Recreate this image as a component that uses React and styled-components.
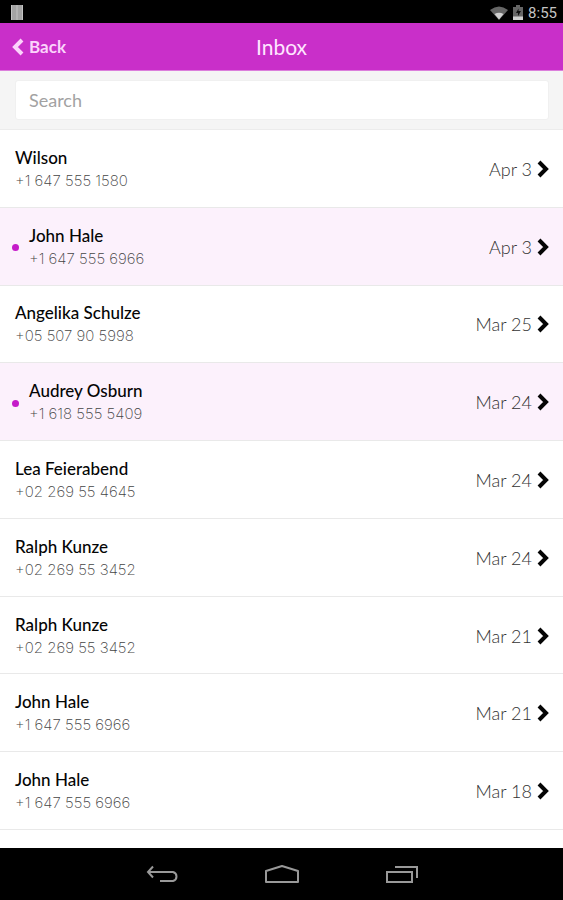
import React from "react";
import styled, { createGlobalStyle } from "styled-components";

const GlobalStyle = createGlobalStyle`
  * { box-sizing: border-box; }
  body {
    margin: 0;
    background: #fff;
    color: #050505;
    font-family: Lato, "Open Sans", sans-serif;
  }
  button, input { font: inherit; }
`;

const Screen = styled.div`
  display: flex;
  flex-direction: column;
  min-height: 100vh;
`;

const StatusBar = styled.div`
  display: flex;
  align-items: center;
  gap: 5px;
  height: 23px;
  padding: 2px 6px 0 11px;
  background: #000;
  color: #c4c4c4;
  font: 15px/20px Roboto, sans-serif;
`;

const StatusSpacer = styled.span`
  flex: 1;
`;

const Header = styled.header`
  display: grid;
  grid-template-columns: 1fr auto 1fr;
  align-items: center;
  height: 48px;
  padding: 0 12px;
  background: #c92fc9;
  color: #ffe6ff;
  border-bottom: 1px solid #dc7fdc;
`;

const BackButton = styled.button`
  display: flex;
  align-items: center;
  justify-self: start;
  gap: 5px;
  padding: 0;
  border: 0;
  background: none;
  color: #fbd3fb;
  font-size: 17px;
  line-height: 24px;
  font-weight: 700;
`;

const Title = styled.h1`
  margin: 0;
  font-size: 21px;
  line-height: 28px;
  font-weight: 400;
`;

const SearchBar = styled.div`
  padding: 9px 14px 9px 15px;
  background: #f5f5f5;
  border-bottom: 1px solid #ececec;
`;

const SearchInput = styled.input`
  display: block;
  width: 100%;
  height: 40px;
  padding: 0 13px;
  border: 1px solid #f0f0f0;
  border-radius: 3px;
  background: #fff;
  color: #333;
  font-size: 18px;
  outline: none;
  &::placeholder { color: #a2a2a2; opacity: 1; }
`;

const MessageList = styled.ul`
  flex: 1;
  display: grid;
  grid-auto-rows: 1fr;
  margin: 0;
  padding: 0 0 18px;
  list-style: none;
`;

const MessageItem = styled.li`
  display: flex;
  border-bottom: 1px solid #e9e9e9;
  background: ${(p) => (p.$unread ? "#fcf1fc" : "#fff")};
`;

const MessageButton = styled.button`
  flex: 1;
  display: flex;
  align-items: center;
  padding: 1px 14px 0 ${(p) => (p.$unread ? "12px" : "15px")};
  border: 0;
  background: none;
  color: inherit;
  text-align: left;
`;

const UnreadDot = styled.span`
  width: 7px;
  height: 7px;
  margin: 2px 10px 0 0;
  border-radius: 50%;
  background: #c51bc9;
`;

const Contact = styled.span`
  flex: 1;
  display: flex;
  flex-direction: column;
`;

const Name = styled.span`
  font-size: 17px;
  line-height: 23px;
  font-weight: 500;
`;

const Phone = styled.span`
  color: #444;
  font-family: Inter, Lato, sans-serif;
  font-size: 15px;
  line-height: 23px;
  font-weight: 200;
`;

const DateText = styled.time`
  margin-right: 5px;
  color: #333;
  font-size: 18px;
  line-height: 24px;
  font-weight: 300;
`;

const NavBar = styled.nav`
  display: flex;
  justify-content: center;
  align-items: center;
  gap: 72px;
  height: 52px;
  padding-top: 2px;
  background: #000;
`;

const NavButton = styled.button`
  display: flex;
  padding: 4px 6px;
  border: 0;
  background: none;
  color: #999;
`;

const messages = [
  { name: "Wilson", phone: "+1 647 555 1580", date: "Apr 3" },
  { name: "John Hale", phone: "+1 647 555 6966", date: "Apr 3", unread: true },
  { name: "Angelika Schulze", phone: "+05 507 90 5998", date: "Mar 25" },
  { name: "Audrey Osburn", phone: "+1 618 555 5409", date: "Mar 24", unread: true },
  { name: "Lea Feierabend", phone: "+02 269 55 4645", date: "Mar 24" },
  { name: "Ralph Kunze", phone: "+02 269 55 3452", date: "Mar 24" },
  { name: "Ralph Kunze", phone: "+02 269 55 3452", date: "Mar 21" },
  { name: "John Hale", phone: "+1 647 555 6966", date: "Mar 21" },
  { name: "John Hale", phone: "+1 647 555 6966", date: "Mar 18" },
];

function Chevron({ left }) {
  return (
    <svg width="12" height="18" viewBox="0 0 12 18" fill="none" stroke="currentColor" strokeWidth="4" aria-hidden="true">
      <path d={left ? "M10 2 3 9l7 7" : "M2 2l7 7-7 7"} />
    </svg>
  );
}

function Message({ name, phone, date, unread }) {
  return (
    <MessageItem $unread={unread}>
      <MessageButton $unread={unread}>
        {unread && <UnreadDot />}
        <Contact>
          <Name>{name}</Name>
          <Phone>{phone}</Phone>
        </Contact>
        <DateText>{date}</DateText>
        <Chevron />
      </MessageButton>
    </MessageItem>
  );
}

export default function App() {
  return (
    <Screen>
      <GlobalStyle />
      <StatusBar>
        <svg width="12" height="15" viewBox="0 0 12 15" aria-hidden="true">
          <path d="M0 0h12v15H0z" fill="#a4a4a4" />
          <path d="M.5 0v15M6 0v15M11.500 0v15" stroke="#c4c4c4" />
        </svg>
        <StatusSpacer />
        <svg width="18" height="14" viewBox="0 0 18 14" aria-hidden="true">
          <path d="M0 4Q9-3 18 4L9 14Z" fill="#666" />
          <path d="M4.5 8Q9 5.500 13.500 8L9 13.500Z" fill="#d0d0d0" />
        </svg>
        <svg width="10" height="15" viewBox="0 0 10 15" aria-hidden="true">
          <path d="M3 0h4v2h3v13H0V2h3z" fill="#666" />
          <path d="M5.5 3.5 3 8h2v3l3-5H5.5z" fill="#111" />
          <path d="M0 11.5h10V15H0z" fill="#d0d0d0" />
        </svg>
        <span>8:55</span>
      </StatusBar>
      <Header>
        <BackButton><Chevron left />Back</BackButton>
        <Title>Inbox</Title>
      </Header>
      <SearchBar>
        <SearchInput type="search" placeholder="Search" aria-label="Search" />
      </SearchBar>
      <MessageList>
        {messages.map((message, index) => <Message key={index} {...message} />)}
      </MessageList>
      <NavBar aria-label="System navigation">
        <NavButton aria-label="Back">
          <svg width="36" height="20" viewBox="0 0 36 20" fill="none" stroke="currentColor" strokeWidth="2" aria-hidden="true">
            <path d="M9 1.5 4 7l5 5.500M4 7h25q3.500 1 3.500 4.500T29 16H16" />
          </svg>
        </NavButton>
        <NavButton aria-label="Home">
          <svg width="36" height="20" viewBox="0 0 36 20" fill="none" stroke="currentColor" strokeWidth="2" aria-hidden="true">
            <path d="M2 17V6l16-5 16 5v11z" strokeLinejoin="round" />
          </svg>
        </NavButton>
        <NavButton aria-label="Recent apps">
          <svg width="36" height="20" viewBox="0 0 36 20" fill="none" stroke="currentColor" strokeWidth="2" aria-hidden="true">
            <path d="M3 7h25v10H3zM11 2h22v11" />
          </svg>
        </NavButton>
      </NavBar>
    </Screen>
  );
}
